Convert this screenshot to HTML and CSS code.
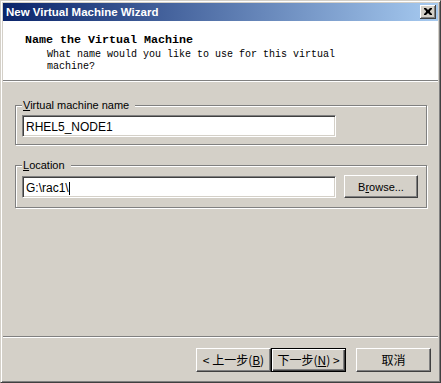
FILE: index.html
```html
<!DOCTYPE html>
<html>
<head>
<meta charset="utf-8">
<link rel="stylesheet" href="styles.css">
</head>
<body>
<div class="window">
  <div class="titlebar">
    <span class="title">New Virtual Machine Wizard</span>
    <span class="close"><svg width="8" height="7" viewBox="0 0 8 7"><path d="M0 0h2l2 2 2-2h2v1l-2 2v1l2 2v1h-2l-2-2-2 2h-2v-1l2-2v-1l-2-2z" fill="#000"/></svg></span>
  </div>
  <div class="header">
    <div class="h-title">Name the Virtual Machine</div>
    <div class="h-sub">What name would you like to use for this virtual<br>machine?</div>
  </div>
  <div class="sep"></div>
  <div class="body">
    <fieldset class="group">
      <legend><u>V</u>irtual machine name</legend>
      <div class="row"><div class="input">RHEL5_NODE1</div></div>
    </fieldset>
    <fieldset class="group g2">
      <legend><u>L</u>ocation</legend>
      <div class="row"><div class="input">G:\rac1\<span class="caret"></span></div><button class="btn browse">B<u>r</u>owse...</button></div>
    </fieldset>
  </div>
  <div class="sep"></div>
  <div class="footer">
    <button class="btn cjk">&lt; 上一步(<u>B</u>)</button><button class="btn cjk default">下一步(<u>N</u>) &gt;</button><button class="btn cjk cancel">取消</button>
  </div>
</div>
</body>
</html>
```
FILE: styles.css
```css
html, body { margin: 0; padding: 0; background: #d4d0c8; }
.window {
  width: 441px; height: 383px; box-sizing: border-box;
  border: 1px solid; border-color: #d4d0c8 #404040 #404040 #d4d0c8;
  box-shadow: inset 1px 1px #fff, inset -1px -1px #808080;
  padding: 2px; background: #d4d0c8;
  display: flex; flex-direction: column;
  font-family: "Liberation Sans", Arial, sans-serif; font-size: 11px; color: #000;
}
.titlebar {
  height: 18px; flex: none;
  background: linear-gradient(to right, #0a246a, #a6caf0);
  display: flex; align-items: center; justify-content: space-between;
  padding: 0 2px 0 3px; color: #fff; font-weight: bold; font-size: 11.5px;
}
.close {
  width: 16px; height: 14px; background: #d4d0c8; box-sizing: border-box;
  box-shadow: inset -1px -1px #404040, inset 1px 1px #fff, inset -2px -2px #808080;
  display: flex; align-items: center; justify-content: center; padding: 0 1px 1px 0;
}
.header {
  background: #fff; height: 59px; flex: none; box-sizing: border-box;
  padding: 12px 0 0 22px;
}
.h-title { font: bold 11.67px/14px "Liberation Mono", monospace; }
.h-sub { font: 10px/12px "Liberation Mono", monospace; margin: 2px 0 0 22px; }
.sep { height: 2px; flex: none; box-sizing: border-box; border-top: 1px solid #808080; border-bottom: 1px solid #fff; }
.body { flex: 1; padding: 17px 11px 0 12px; }
.group {
  margin: 0; border: 1px solid #808080;
  box-shadow: inset 1px 1px #fff, 1px 1px #fff;
  padding: 3px 7px 7px 6px; min-width: 0;
}
.g2 { margin-top: 14px; padding-bottom: 9px; }
legend { padding: 0 6px 0 1px; background: #d4d0c8; line-height: 13px; font-size: 11px; }
.row { display: flex; align-items: flex-end; gap: 8px; }
.input {
  width: 314px; height: 22px; box-sizing: border-box; background: #fff;
  border: 1px solid; border-color: #808080 #fff #fff #808080;
  box-shadow: inset 1px 1px #404040, inset -1px -1px #d4d0c8;
  padding: 3px 0 0 3px; font-size: 12px; line-height: 15px;
  display: flex; align-items: center; align-self: flex-end;
}
.caret { display: inline-block; width: 1px; height: 13px; background: #000; margin-left: 0; }
.btn {
  width: 75px; height: 23px; margin: 0; padding: 0; box-sizing: border-box;
  background: #d4d0c8; border: 1px solid; border-color: #fff #404040 #404040 #fff;
  box-shadow: inset -1px -1px #808080;
  font-family: "Liberation Sans", Arial, sans-serif; font-size: 11px; color: #000;
}
.browse { width: 74px; height: 23px; }
.cjk { font-family: "Noto Sans CJK SC", "Liberation Sans", sans-serif; font-size: 12px; line-height: 14px; height: 24px; }
.default {
  border: 1px solid #000;
  box-shadow: inset 1px 1px #fff, inset -1px -1px #404040, inset -2px -2px #808080;
}
.footer { flex: none; display: flex; padding: 10px 7px 8px 0; justify-content: flex-end; }
.cancel { margin-left: 10px; }
```
